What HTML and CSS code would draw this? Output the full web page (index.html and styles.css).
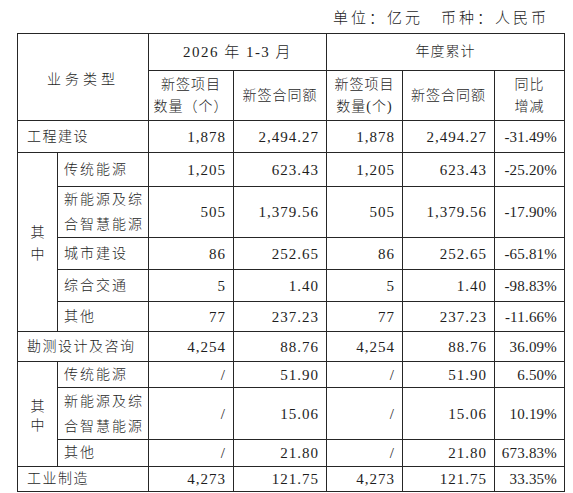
FILE: index.html
```html
<!DOCTYPE html>
<html lang="zh-CN">
  <head>
    <meta charset="UTF-8" />
    <meta name="viewport" content="width=device-width, initial-scale=1.0" />
    <title>新签合同额</title>
    <link rel="stylesheet" href="styles.css">
  </head>
  <body>
    <div class="report">
      <div class="report-unit">单位：亿元　币种：人民币</div>
      <table class="report-table">
        <colgroup>
          <col class="col-side" />
          <col class="col-name" />
          <col class="col-a" />
          <col class="col-b" />
          <col class="col-c" />
          <col class="col-d" />
          <col class="col-e" />
        </colgroup>
        <thead>
          <tr class="h-37">
            <th colspan="2" rowspan="2" class="head-type">业务类型</th>
            <th colspan="2" class="head-period">2026 年 1-3 月</th>
            <th colspan="3">年度累计</th>
          </tr>
          <tr class="h-50">
            <th>新签项目<br />数量（个）</th>
            <th>新签合同额</th>
            <th>新签项目<br />数量(个)</th>
            <th>新签合同额</th>
            <th>同比<br />增减</th>
          </tr>
        </thead>
        <tbody>
          <tr class="h-32">
            <td colspan="2" class="name">工程建设</td>
            <td class="num">1,878</td>
            <td class="num">2,494.27</td>
            <td class="num">1,878</td>
            <td class="num">2,494.27</td>
            <td class="num pct">-31.49%</td>
          </tr>
          <tr class="h-34">
            <td rowspan="5" class="side">其<br />中</td>
            <td class="name sub">传统能源</td>
            <td class="num">1,205</td>
            <td class="num">623.43</td>
            <td class="num">1,205</td>
            <td class="num">623.43</td>
            <td class="num pct">-25.20%</td>
          </tr>
          <tr class="h-51">
            <td class="name sub two">新能源及综<br />合智慧能源</td>
            <td class="num">505</td>
            <td class="num">1,379.56</td>
            <td class="num">505</td>
            <td class="num">1,379.56</td>
            <td class="num pct">-17.90%</td>
          </tr>
          <tr class="h-32">
            <td class="name sub">城市建设</td>
            <td class="num">86</td>
            <td class="num">252.65</td>
            <td class="num">86</td>
            <td class="num">252.65</td>
            <td class="num pct">-65.81%</td>
          </tr>
          <tr class="h-32">
            <td class="name sub">综合交通</td>
            <td class="num">5</td>
            <td class="num">1.40</td>
            <td class="num">5</td>
            <td class="num">1.40</td>
            <td class="num pct">-98.83%</td>
          </tr>
          <tr class="h-30">
            <td class="name sub">其他</td>
            <td class="num">77</td>
            <td class="num">237.23</td>
            <td class="num">77</td>
            <td class="num">237.23</td>
            <td class="num pct">-11.66%</td>
          </tr>
          <tr class="h-30">
            <td colspan="2" class="name">勘测设计及咨询</td>
            <td class="num">4,254</td>
            <td class="num">88.76</td>
            <td class="num">4,254</td>
            <td class="num">88.76</td>
            <td class="num pct">36.09%</td>
          </tr>
          <tr class="h-26">
            <td rowspan="3" class="side side-tight">其<br />中</td>
            <td class="name sub">传统能源</td>
            <td class="num">/</td>
            <td class="num">51.90</td>
            <td class="num">/</td>
            <td class="num">51.90</td>
            <td class="num pct">6.50%</td>
          </tr>
          <tr class="h-52">
            <td class="name sub two">新能源及综<br />合智慧能源</td>
            <td class="num">/</td>
            <td class="num">15.06</td>
            <td class="num">/</td>
            <td class="num">15.06</td>
            <td class="num pct">10.19%</td>
          </tr>
          <tr class="h-27">
            <td class="name sub">其他</td>
            <td class="num">/</td>
            <td class="num">21.80</td>
            <td class="num">/</td>
            <td class="num">21.80</td>
            <td class="num pct">673.83%</td>
          </tr>
          <tr class="h-25">
            <td colspan="2" class="name">工业制造</td>
            <td class="num">4,273</td>
            <td class="num">121.75</td>
            <td class="num">4,273</td>
            <td class="num">121.75</td>
            <td class="num pct">33.35%</td>
          </tr>
        </tbody>
      </table>
    </div>
  </body>
</html>
```

FILE: styles.css
```css
:root {
  --color-text: #1e1e1e;
  --color-line: #262626;
}
body {
  margin: 0;
  background: #fff;
  color: var(--color-text);
  font-family: "Liberation Serif", "Noto Sans CJK SC", serif;
}

.report {
  width: 548px;
  margin-left: 17px;
}
.report-unit {
  height: 33px;
  line-height: 36px;
  padding-right: 16px;
  text-align: right;
  font-size: 15px;
  font-weight: 300;
  letter-spacing: 3px;
}

.report-table {
  width: 548px;
  table-layout: fixed;
  border-collapse: collapse;
  font-size: 14px;
  font-weight: 300;
}
.report-table th,
.report-table td {
  border: 1px solid var(--color-line);
  padding: 0;
  line-height: 20px;
}
.report-table th {
  font-weight: 300;
  text-align: center;
  letter-spacing: 1px;
  line-height: 22px;
}

.col-side { width: 40px; }
.col-name { width: 91px; }
.col-a { width: 85px; }
.col-b { width: 93px; }
.col-c { width: 76px; }
.col-d { width: 92px; }
.col-e { width: 70px; }

.report-table .head-type {
  letter-spacing: 4px;
  padding-top: 5px;
}
.report-table .head-period {
  font-size: 15px;
  letter-spacing: 1.5px;
}

.report-table .name {
  padding-left: 9px;
  letter-spacing: 1.5px;
}
.report-table .sub {
  padding-left: 6px;
  letter-spacing: 2px;
}
.report-table .two {
  line-height: 25px;
}
.report-table .side {
  text-align: center;
  line-height: 22px;
  padding-top: 4px;
}
.report-table .side-tight {
  line-height: 19px;
}
.report-table .num {
  text-align: right;
  padding-right: 7px;
  font-size: 15px;
  letter-spacing: 1px;
}
.report-table .pct {
  padding-right: 7px;
  letter-spacing: 0.2px;
}

.h-37 { height: 37px; }
.h-50 { height: 50px; }
.h-32 { height: 32px; }
.h-34 { height: 34px; }
.h-51 { height: 51px; }
.h-30 { height: 30px; }
.h-26 { height: 26px; }
.h-52 { height: 52px; }
.h-27 { height: 27px; }
.h-25 { height: 25px; }
```
